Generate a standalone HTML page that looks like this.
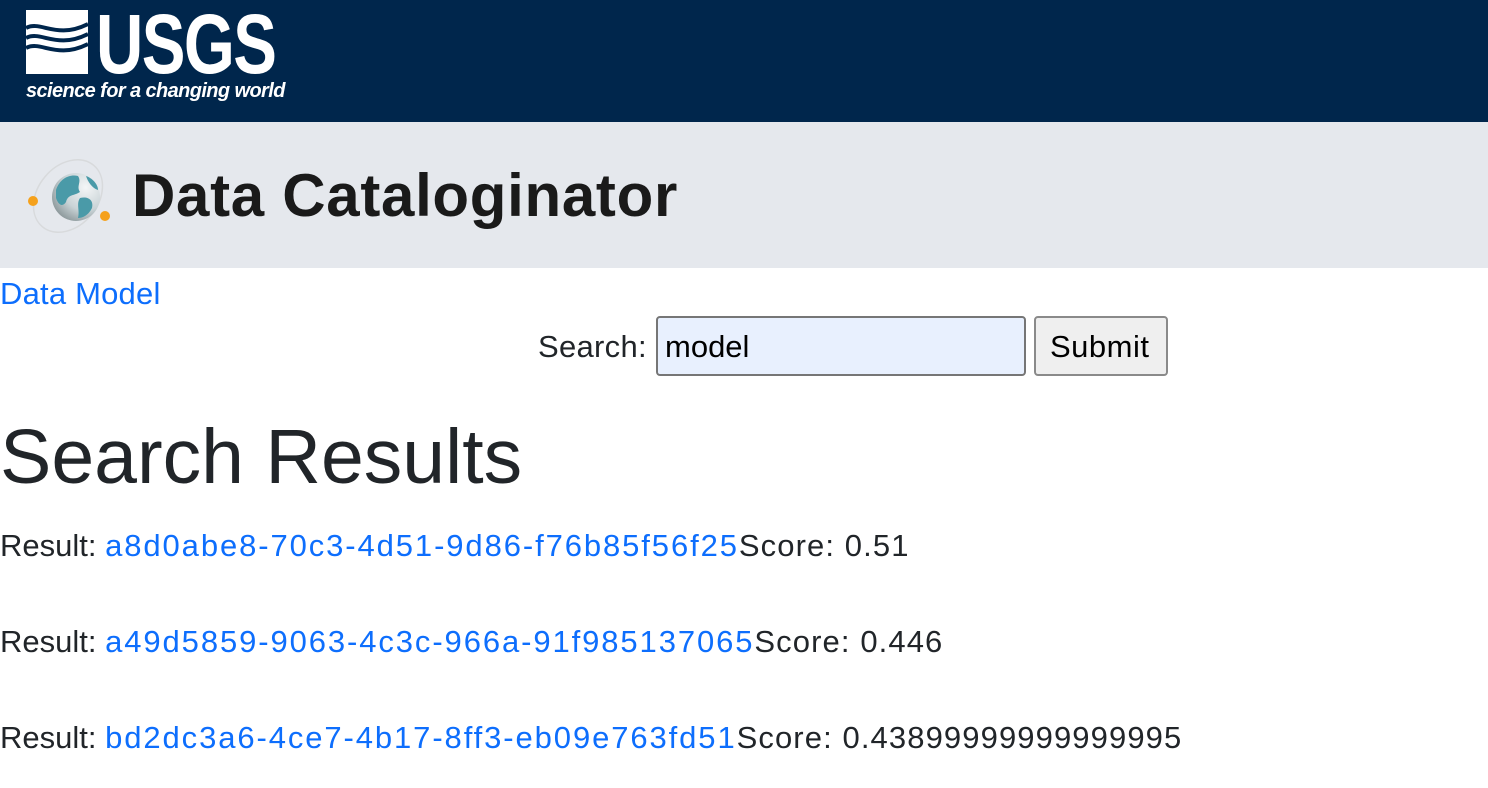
<!DOCTYPE html>
<html><head><meta charset="utf-8"><style>
body{margin:0;width:1488px;height:788px;overflow:hidden;background:#fff;font-family:"Liberation Sans",Arial,sans-serif;color:#212529;position:relative}
.a{position:absolute;white-space:nowrap;line-height:1}
a{color:#0d6efd;text-decoration:none}
.r{font-size:31px;letter-spacing:0}
.r a{letter-spacing:1.9px}
.r b{font-weight:normal;letter-spacing:1.1px}
</style></head><body>
<div style="position:absolute;left:0;top:0;width:1488px;height:122px;background:#00264c"></div>
<svg class="a" style="left:26px;top:10px" width="62" height="64" viewBox="0 0 62 64">
<rect width="62" height="64" fill="#fff"/>
<path d="M0 18 C15 10 30 30 62 14 M0 28 C15 20 30 40 62 24 M0 38 C15 30 30 50 62 34" stroke="#00264c" stroke-width="4" fill="none"/>
</svg>
<div class="a" style="left:96px;top:2px;font-size:84px;font-weight:bold;color:#fff;transform:scaleX(0.78);transform-origin:left;letter-spacing:-2px">USGS</div>
<div class="a" style="left:26px;top:81px;font-size:20px;font-weight:bold;font-style:italic;color:#fff;letter-spacing:-0.6px">science for a changing world</div>
<div style="position:absolute;left:0;top:122px;width:1488px;height:146px;background:#e5e8ed"></div>
<svg class="a" style="left:26px;top:152px" width="90" height="90" viewBox="0 0 90 90">
<defs><radialGradient id="g" cx="0.7" cy="0.3" r="0.8"><stop offset="0" stop-color="#f4f6f7"/><stop offset="0.6" stop-color="#c9d3d6"/><stop offset="1" stop-color="#8a9699"/></radialGradient></defs>
<ellipse cx="42" cy="44" rx="30" ry="40" transform="rotate(40 42 44)" fill="none" stroke="#d8dadc" stroke-width="1.5"/>
<circle cx="50" cy="45" r="24" fill="url(#g)"/>
<path d="M30 38 C34 26 44 22 52 24 C56 30 50 34 54 40 C48 44 42 42 40 50 C36 56 32 52 30 46Z" fill="#4a9aa8"/>
<path d="M54 46 C62 44 68 48 66 56 C62 64 56 66 52 66 C54 58 50 52 54 46Z" fill="#4a9aa8"/>
<path d="M60 24 C66 26 72 32 72 38 C66 36 62 30 60 24Z" fill="#4a9aa8"/>
<circle cx="7" cy="49" r="5" fill="#f5a11c"/>
<circle cx="79" cy="64" r="5" fill="#f5a11c"/>
</svg>
<div class="a" style="left:132px;top:166px;font-size:60px;font-weight:bold;color:#1a1a1a;letter-spacing:0.7px">Data Cataloginator</div>
<div class="a" style="left:0;top:278px;font-size:31px;letter-spacing:0.2px"><a>Data Model</a></div>
<div class="a" style="left:538px;top:331px;font-size:31px;letter-spacing:0.3px">Search:</div>
<div style="position:absolute;left:656px;top:316px;width:370px;height:60px;border:2px solid #767676;border-radius:4px;background:#e8f0fe;box-sizing:border-box"></div>
<div class="a" style="left:665px;top:331px;font-size:31px;color:#000">model</div>
<div style="position:absolute;left:1034px;top:316px;width:134px;height:60px;border:2px solid #8a8a8a;border-radius:4px;background:#efefef;box-sizing:border-box"></div>
<div class="a" style="left:1050px;top:331px;font-size:31px;color:#000;letter-spacing:0.5px">Submit</div>
<div class="a" style="left:0;top:419px;font-size:77px">Search Results</div>
<div class="a r" style="left:0;top:530px">Result: <a>a8d0abe8-70c3-4d51-9d86-f76b85f56f25</a><b>Score: 0.51</b></div>
<div class="a r" style="left:0;top:626px">Result: <a>a49d5859-9063-4c3c-966a-91f985137065</a><b>Score: 0.446</b></div>
<div class="a r" style="left:0;top:722px">Result: <a>bd2dc3a6-4ce7-4b17-8ff3-eb09e763fd51</a><b>Score: 0.43899999999999995</b></div>
</body></html>
